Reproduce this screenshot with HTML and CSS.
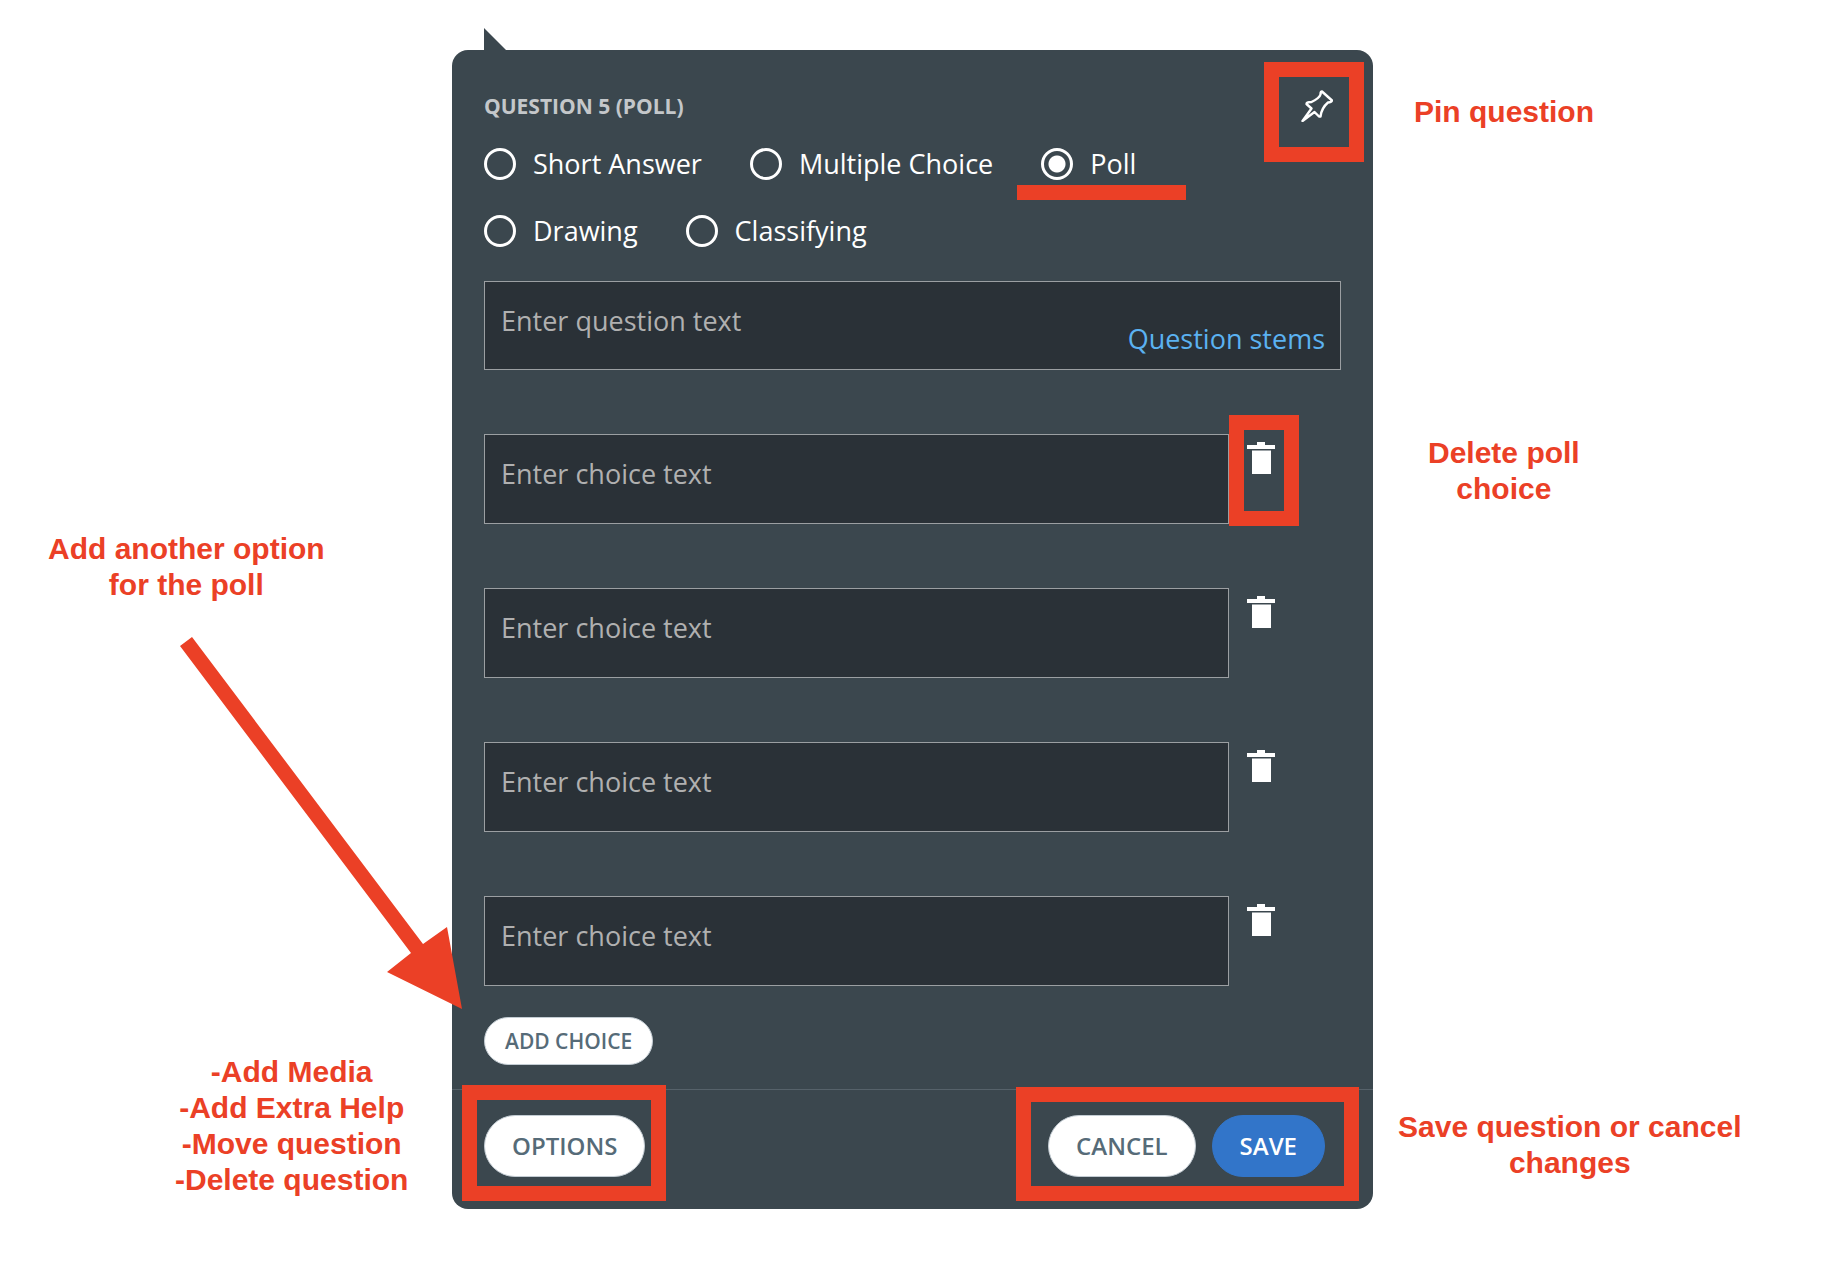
FILE: index.html
```html
<!DOCTYPE html>
<html lang="en">
<head>
  <meta charset="UTF-8" />
  <meta name="viewport" content="width=device-width, initial-scale=1" />
  <title>Poll question editor</title>
  <link rel="stylesheet" href="styles.css">
</head>
<body>
  <svg class="sprite" aria-hidden="true">
    <symbol id="trash" viewBox="0 0 28 32">
      <path fill="currentColor" d="M10 0h8v3h10v4H0V3h10zM5 8.500h19V32H5z" />
    </symbol>
  </svg>

  <div class="page">
    <!-- Left notes -->
    <aside class="notes notes-left">
      <p class="note note-add">Add another option<br>for the poll</p>
      <svg class="arrow" viewBox="0 0 282 372" aria-hidden="true">
        <path d="M0 9 12 0 243 307 267 290 282 372 207 335 231 316z" />
      </svg>
      <p class="note note-options">-Add Media<br>-Add Extra Help<br>-Move question<br>-Delete question</p>
    </aside>

    <!-- Question editor -->
    <form class="card">
      <header class="card-header">
        <h1>QUESTION 5 (POLL)</h1>
        <div class="marked pin-mark">
          <button type="button" class="icon-button" aria-label="Pin question">
            <svg width="32" height="32" viewBox="0 0 32 32" fill="none" stroke="currentColor" stroke-width="2.4" stroke-linejoin="round" stroke-linecap="round">
              <path d="M21 1.500 31 10.500Q30.500 12.500 27 12.500Q20.500 18 19.500 26.500L18 26.500 13.500 22 1.500 31 10.500 18.500 5.500 14Q5.500 12 10.500 12Q18.500 8 19.500 4.500Q19.500 1.500 21 1.500Z" />
            </svg>
          </button>
        </div>
      </header>

      <div class="types" role="radiogroup" aria-label="Question type">
        <label class="type"><input type="radio" name="type"> Short Answer</label>
        <label class="type"><input type="radio" name="type"> Multiple Choice</label>
        <label class="type underlined"><input type="radio" name="type" checked> Poll</label>
        <label class="type"><input type="radio" name="type"> Drawing</label>
        <label class="type"><input type="radio" name="type"> Classifying</label>
      </div>

      <div class="fields">
        <div class="question">
          <textarea placeholder="Enter question text" aria-label="Question text"></textarea>
          <a href="#" class="stems">Question stems</a>
        </div>
        <div class="choice">
          <textarea placeholder="Enter choice text" aria-label="Choice 1"></textarea>
          <div class="marked trash-mark">
            <button type="button" class="icon-button" aria-label="Delete choice 1"><svg width="28" height="32"><use href="#trash" /></svg></button>
          </div>
        </div>
        <div class="choice">
          <textarea placeholder="Enter choice text" aria-label="Choice 2"></textarea>
          <button type="button" class="icon-button" aria-label="Delete choice 2"><svg width="28" height="32"><use href="#trash" /></svg></button>
        </div>
        <div class="choice">
          <textarea placeholder="Enter choice text" aria-label="Choice 3"></textarea>
          <button type="button" class="icon-button" aria-label="Delete choice 3"><svg width="28" height="32"><use href="#trash" /></svg></button>
        </div>
        <div class="choice">
          <textarea placeholder="Enter choice text" aria-label="Choice 4"></textarea>
          <button type="button" class="icon-button" aria-label="Delete choice 4"><svg width="28" height="32"><use href="#trash" /></svg></button>
        </div>
      </div>

      <button type="button" class="button small">ADD CHOICE</button>

      <footer class="card-footer">
        <div class="marked options-mark">
          <button type="button" class="button">OPTIONS</button>
        </div>
        <div class="marked save-mark">
          <button type="button" class="button">CANCEL</button>
          <button type="button" class="button primary">SAVE</button>
        </div>
      </footer>
    </form>

    <!-- Right notes -->
    <aside class="notes notes-right">
      <p class="note note-pin">Pin question</p>
      <p class="note note-delete">Delete poll<br>choice</p>
      <p class="note note-save">Save question or cancel<br>changes</p>
    </aside>
  </div>
</body>
</html>
```

FILE: styles.css
```css
* {
  box-sizing: border-box;
}

body {
  margin: 0;
  background: #fff;
  font-family: "Open Sans", "Noto Sans", sans-serif;
  font-size: 27px;
}

.sprite {
  display: none;
}

.page {
  display: grid;
  grid-template-columns: 452fr 921fr 455fr;
  padding: 50px 0 63px;
}

/* Notes beside the card */
.notes {
  display: flex;
  flex-direction: column;
  align-items: flex-start;
  min-width: 0;
}

.notes-left {
  position: relative;
  z-index: 1;
  padding-top: 481px;
}

.notes-right {
  padding-top: 44px;
}

.note {
  margin: 0;
  color: #eb4026;
  font-family: "Liberation Sans", Arial, sans-serif;
  font-size: 30px;
  font-weight: bold;
  line-height: 36px;
  text-align: center;
  white-space: nowrap;
}

.note-add {
  margin-left: 48px;
}

.arrow {
  width: 282px;
  height: 372px;
  margin: 34px 0 0 180px;
  fill: #eb4026;
  flex-shrink: 0;
}

.note-options {
  margin: 45px 0 0 175px;
}

.note-pin {
  margin-left: 41px;
}

.note-delete {
  margin: 305px 0 0 55px;
}

.note-save {
  margin: 602px 0 0 25px;
}

/* Card */
.card {
  position: relative;
  padding: 40px 32px 32px;
  border-radius: 16px;
  background: #3b474e;
  color: #fff;
}

.card::before {
  content: "";
  position: absolute;
  left: 32px;
  bottom: 100%;
  border-left: 22px solid #3b474e;
  border-top: 22px solid transparent;
}

.card-header {
  display: flex;
  justify-content: space-between;
  align-items: center;
  padding-right: 8px;
}

h1 {
  margin: 0;
  color: #c4c7ca;
  font-size: 21px;
  line-height: 24px;
}

.types {
  display: flex;
  flex-wrap: wrap;
  gap: 35px 48px;
  margin-top: 26px;
  padding-right: 120px;
}

.type {
  position: relative;
  display: flex;
  align-items: center;
  gap: 17px;
  line-height: 32px;
}

.type input {
  appearance: none;
  width: 32px;
  height: 32px;
  margin: 0;
  border: 3px solid #fff;
  border-radius: 50%;
}

.type input:checked {
  background: radial-gradient(circle, #fff 8px, transparent 9px);
}

/* Fields */
.fields {
  display: flex;
  flex-direction: column;
  gap: 64px;
  margin: 34px 0 31px;
}

.question {
  position: relative;
  display: flex;
  height: 89px;
}

.choice {
  display: flex;
  align-items: flex-start;
  gap: 18px;
  padding-right: 66px;
}

.choice .icon-button {
  margin-top: 8px;
}

.choice .marked .icon-button {
  margin-top: 0;
}

textarea {
  flex: 1;
  min-width: 0;
  height: 90px;
  padding: 21px 16px;
  border: 1px solid #9b9fa2;
  border-radius: 0;
  background: #2a3137;
  color: #fff;
  font: inherit;
  line-height: 36px;
  resize: none;
}

.question textarea {
  height: 100%;
}

textarea::placeholder {
  color: #b0b0b0;
}

.stems {
  position: absolute;
  right: 16px;
  bottom: 13px;
  color: #5bb2f1;
  font-weight: 500;
  line-height: 36px;
  text-decoration: none;
}

/* Buttons */
.icon-button {
  display: block;
  padding: 0;
  border: 0;
  background: none;
  color: #fff;
  cursor: pointer;
}

.icon-button svg {
  display: block;
}

.button {
  height: 62px;
  padding: 0 27px 2px;
  border: 1px solid #c3ccd3;
  border-radius: 31px;
  background: #fff;
  color: #566b78;
  font: inherit;
  font-size: 24px;
  font-weight: 600;
  cursor: pointer;
}

.button.small {
  display: block;
  height: 48px;
  padding: 0 20px;
  border-radius: 24px;
  font-size: 21px;
}

.button.primary {
  border-color: #3275c9;
  background: #3275c9;
  color: #fff;
}

.card-footer {
  display: flex;
  justify-content: space-between;
  margin: 24px -32px 0;
  padding: 25px 48px 0 32px;
  border-top: 1px solid #56626a;
}

/* Red highlights */
.marked {
  position: relative;
  display: flex;
  gap: 16px;
}

.marked::after {
  content: "";
  position: absolute;
  border: 15px solid #eb4026;
  pointer-events: none;
}

.pin-mark::after {
  inset: -28px -31px -40px -37px;
}

.trash-mark {
  margin-top: 8px;
}

.trash-mark::after {
  inset: -27px -24px -52px -18px;
}

.options-mark::after {
  inset: -30px -21px -24px -22px;
}

.save-mark::after {
  inset: -28px -34px -24px -32px;
}

.underlined::after {
  content: "";
  position: absolute;
  left: -24px;
  right: -50px;
  bottom: -20px;
  height: 15px;
  background: #eb4026;
}
```
